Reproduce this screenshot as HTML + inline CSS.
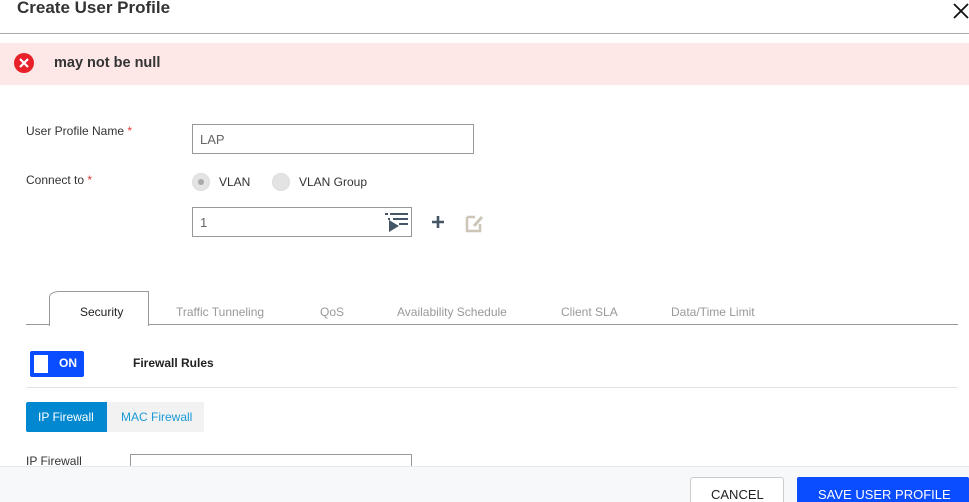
<!DOCTYPE html>
<html><head><meta charset="utf-8"><style>
*{margin:0;padding:0;box-sizing:border-box}
html,body{width:969px;height:502px;overflow:hidden}
body{background:#fff;font-family:"Liberation Sans",Arial,sans-serif;position:relative;color:#333}
.a{position:absolute}
.lbl{font-size:12px;color:#333}
.req{color:#e53935}
.inp{border:1px solid #999;background:#fff}
.tab{position:absolute;top:305px;font-size:12px;color:#999}
</style></head><body>
<div class="a" style="left:17px;top:-2px;font-size:17px;font-weight:bold;color:#333">Create User Profile</div>
<svg class="a" style="left:953px;top:3px" width="16" height="16"><path d="M1 1L15 15M15 1L1 15" stroke="#111" stroke-width="1.8"/></svg>
<div class="a" style="left:0;top:33px;width:969px;height:1px;background:#aaa"></div>
<div class="a" style="left:0;top:43px;width:969px;height:42px;background:#fde7e7"></div>
<svg class="a" style="left:14px;top:53px" width="20" height="20"><circle cx="10" cy="10" r="10" fill="#e8202a"/><path d="M6 6L14 14M14 6L6 14" stroke="#fff" stroke-width="2.2"/></svg>
<div class="a" style="left:54px;top:55px;font-size:14.5px;font-weight:bold;color:#333">may not be null</div>

<div class="a lbl" style="left:26px;top:124px">User Profile Name <span class="req">*</span></div>
<div class="a inp" style="left:192px;top:124px;width:282px;height:30px"></div>
<div class="a" style="left:200px;top:132px;font-size:13px;color:#666">LAP</div>

<div class="a lbl" style="left:26px;top:173px">Connect to <span class="req">*</span></div>
<div class="a" style="left:192px;top:173px;width:18px;height:18px;border-radius:50%;background:#e3e3e3;border:1px solid #ddd"></div>
<div class="a" style="left:198px;top:179px;width:6px;height:6px;border-radius:50%;background:#aaa"></div>
<div class="a lbl" style="left:219px;top:175px">VLAN</div>
<div class="a" style="left:272px;top:173px;width:18px;height:18px;border-radius:50%;background:#e3e3e3;border:1px solid #ddd"></div>
<div class="a lbl" style="left:299px;top:175px">VLAN Group</div>

<div class="a inp" style="left:192px;top:207px;width:220px;height:30px"></div>
<div class="a" style="left:200px;top:215px;font-size:13px;color:#666">1</div>
<svg class="a" style="left:385px;top:212px" width="24" height="22"><rect x="0" y="1" width="3" height="2" fill="#456"/><rect x="5" y="1" width="18" height="2" fill="#456"/><rect x="3" y="6" width="2" height="2" fill="#456"/><rect x="8" y="6" width="15" height="2" fill="#456"/><path d="M4 8L4 20L14 14Z" fill="#456"/><rect x="14" y="11" width="9" height="2" fill="#456"/></svg>
<svg class="a" style="left:431px;top:215px" width="14" height="14"><path d="M7 1V13M1 7H13" stroke="#456" stroke-width="2.6"/></svg>
<svg class="a" style="left:465px;top:213px" width="20" height="20"><path d="M2 4H10M2 4V18H15V11" stroke="#cbc6b8" stroke-width="2.5" fill="none"/><path d="M9 13L17 4" stroke="#cbc6b8" stroke-width="3"/></svg>

<div class="a" style="left:26px;top:324px;width:932px;height:1px;background:#999"></div>
<div class="a" style="left:49px;top:291px;width:100px;height:35px;background:#fff;border:1px solid #999;border-bottom:none;border-top-left-radius:10px 6px"></div>
<div class="tab" style="left:80px;color:#222">Security</div>
<div class="tab" style="left:176px">Traffic Tunneling</div>
<div class="tab" style="left:320px">QoS</div>
<div class="tab" style="left:397px">Availability Schedule</div>
<div class="tab" style="left:561px">Client SLA</div>
<div class="tab" style="left:671px">Data/Time Limit</div>

<div class="a" style="left:30px;top:351px;width:54px;height:26px;background:#0a4cff;border-radius:2px"></div>
<div class="a" style="left:34px;top:355px;width:14px;height:18px;background:#fff"></div>
<div class="a" style="left:59px;top:356px;font-size:12px;font-weight:bold;color:#fff">ON</div>
<div class="a" style="left:133px;top:356px;font-size:12px;font-weight:bold;color:#222">Firewall Rules</div>
<div class="a" style="left:26px;top:387px;width:932px;height:1px;background:#e2e2e2"></div>

<div class="a" style="left:26px;top:402px;width:81px;height:30px;background:#0288d1;border-radius:2px 0 0 2px"></div>
<div class="a" style="left:38px;top:410px;font-size:12px;color:#fff">IP Firewall</div>
<div class="a" style="left:107px;top:402px;width:97px;height:30px;background:#f2f2f2"></div>
<div class="a" style="left:121px;top:410px;font-size:12px;color:#1a9ad6">MAC Firewall</div>

<div class="a lbl" style="left:26px;top:454px">IP Firewall</div>
<div class="a inp" style="left:130px;top:454px;width:282px;height:20px"></div>

<div class="a" style="left:0;top:466px;width:969px;height:36px;background:#f7f8fa;border-top:1px solid #e8e9ec"></div>
<div class="a" style="left:690px;top:477px;width:94px;height:25px;background:#fff;border:1px solid #ccc;border-bottom:none;border-radius:3px 3px 0 0"></div>
<div class="a" style="left:711px;top:487px;font-size:13px;color:#222">CANCEL</div>
<div class="a" style="left:797px;top:477px;width:172px;height:25px;background:#0a4cff;border-radius:2px 2px 0 0"></div>
<div class="a" style="left:818px;top:487px;font-size:13px;color:#fff">SAVE USER PROFILE</div>
</body></html>
